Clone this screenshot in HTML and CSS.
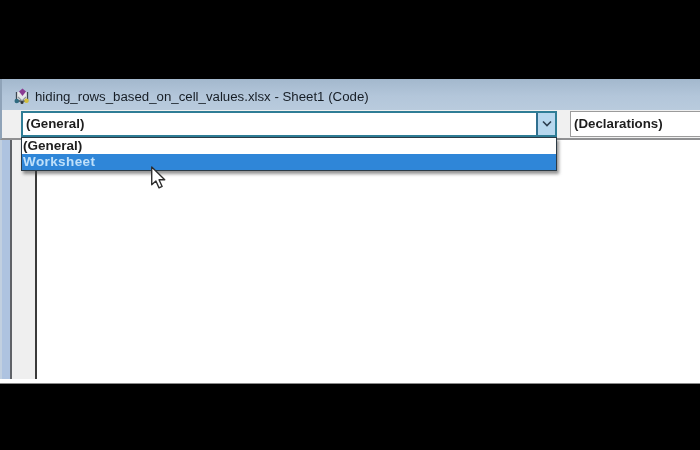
FILE: index.html
```html
<!DOCTYPE html>
<html lang="en">
<head>
<meta charset="utf-8">
<title>Code window</title>
<link rel="stylesheet" href="styles.css">
</head>
<body>
<div class="band top"></div>
<main class="window">
  <header class="title">
    <svg class="doc-icon" width="18" height="18" viewBox="0 0 18 18">
      <path d="M3.500 5v9h11V5" fill="#e4e6e8" stroke="#3c4650" stroke-width="1.300"/>
      <path d="M9.500 1.500l3.500 3-3.500 4.500-3.500-4.500z" fill="#8a3a92"/>
      <path d="M5 10l4 4 4-4" fill="none" stroke="#8d97a0" stroke-width="1.200"/>
      <circle cx="3.800" cy="14" r="2.300" fill="#2f6a80"/>
      <circle cx="13.500" cy="13.800" r="2.200" fill="#d3bf3c"/>
      <circle cx="9" cy="15.500" r="1.500" fill="#2c333a"/>
    </svg>
    <span class="title-text">hiding_rows_based_on_cell_values.xlsx - Sheet1 (Code)</span>
  </header>
  <section class="toolbar">
    <div class="combo active">
      <span class="combo-text">(General)</span>
      <span class="combo-btn">
        <svg width="12" height="8" viewBox="0 0 12 8"><path d="M2 1.500l4 4 4-4" fill="none" stroke="#2c3e50" stroke-width="1.600"/></svg>
      </span>
    </div>
    <div class="combo decl"><span class="combo-text">(Declarations)</span></div>
  </section>
  <section class="pane">
    <div class="edge"></div>
    <div class="margin"></div>
    <div class="code"></div>
  </section>
  <div class="foot"></div>
  <ul class="dropdown">
    <li class="opt">(General)</li>
    <li class="opt sel">Worksheet</li>
  </ul>
  <svg class="cursor" width="17" height="25" viewBox="0 0 16 24">
    <path d="M1.500 1v17l4-3.600 3 6.600 3-1.400-3-6.400h5.500z" fill="#fff" stroke="#2b2b2b" stroke-width="1.300" stroke-linejoin="round"/>
  </svg>
</main>
<div class="band bottom"></div>
</body>
</html>
```
FILE: styles.css
```css
* { box-sizing: border-box; }
html, body { margin: 0; height: 100%; }
body {
  width: 700px;
  height: 450px;
  overflow: hidden;
  display: flex;
  flex-direction: column;
  background: #000;
  font-family: "Liberation Sans", Arial, sans-serif;
}
.band { background: #000; }
.top { height: 79px; }
.bottom { flex: 1; }
.window {
  position: relative;
  height: 305px;
  display: flex;
  flex-direction: column;
  background: #fff;
  overflow: hidden;
  filter: blur(0.6px);
}
.title {
  height: 31px;
  display: flex;
  align-items: center;
  gap: 4px;
  padding: 3px 0 0 11px;
  background: linear-gradient(#a3b8cd, #b3c6da 55%, #b9cbdd);
  border-left: 2px solid #8fa3b8;
}
.doc-icon { flex: none; }
.title-text {
  font-size: 13.250px;
  color: #161d25;
  white-space: nowrap;
}
.toolbar {
  height: 30px;
  display: flex;
  gap: 13px;
  padding: 1px 0 0 19px;
  background: #f0f0f0;
  border-bottom: 2px solid #8f9092;
  border-left: 2px solid #8fa3b8;
}
.combo {
  height: 26px;
  display: flex;
  align-items: center;
  background: #fff;
  font-size: 13.300px;
  font-weight: bold;
  color: #1e1e1e;
}
.combo-text { padding: 0 0 2px 3px; flex: 1; white-space: nowrap; }
.active { width: 536px; border: 2px solid #2f7d96; }
.combo-btn {
  width: 19px;
  height: 100%;
  display: flex;
  align-items: center;
  justify-content: center;
  background: #b7d7ee;
  border-left: 2px solid #2f6f8f;
}
.decl { flex: 1; border: 1px solid #9b9b9b; border-right: 0; }
.pane { flex: 1; display: flex; min-height: 0; }
.edge {
  width: 12px;
  background: #aec3e0;
  border-left: 2px solid #c2d0e0;
  border-right: 2px solid #5f6267;
}
.margin { width: 23px; background: #efefef; }
.code { flex: 1; background: #fff; border-left: 2px solid #3a3a3a; }
.foot { height: 5px; background: #fff; border-bottom: 1px solid #8a8a8a; }
.dropdown {
  position: absolute;
  left: 21px;
  top: 58px;
  width: 536px;
  margin: 0;
  padding: 0;
  list-style: none;
  background: #fff;
  border: 1px solid #2b3a45;
  box-shadow: 2px 3px 3px rgba(60, 60, 60, .55);
  font-size: 13.500px;
  font-weight: bold;
  color: #1e1e1e;
}
.opt { height: 16px; line-height: 16px; padding-left: 1px; }
.sel { background: #2f86d8; color: #bfe0fa; letter-spacing: 0.400px; }
.cursor { position: absolute; left: 150px; top: 87px; }
```
